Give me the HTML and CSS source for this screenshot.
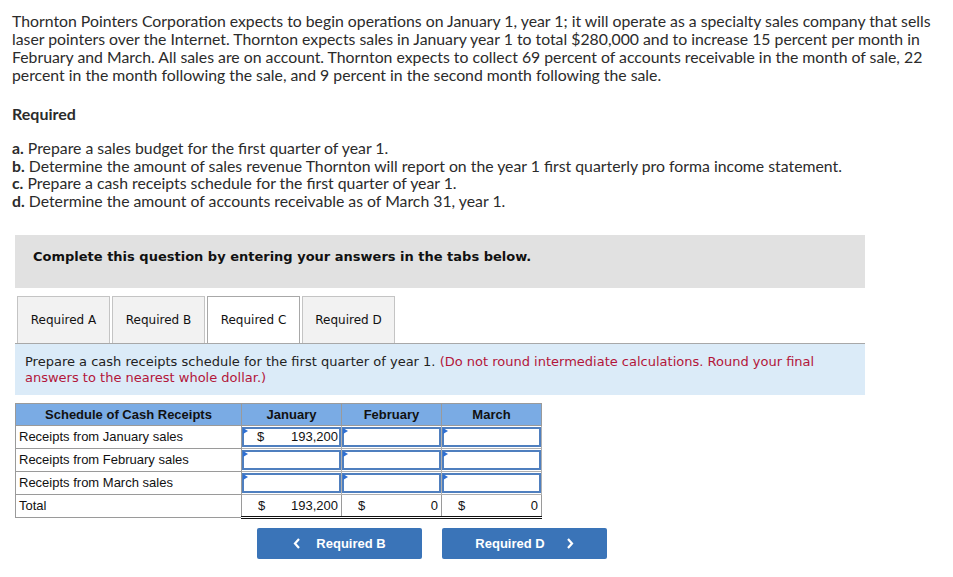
FILE: index.html
```html
<!DOCTYPE html>
<html lang="en">
<head>
    <meta charset="UTF-8">
    <meta name="viewport" content="width=device-width, initial-scale=1.0">
    <title>Cash Receipts Schedule</title>
    <link rel="stylesheet" href="styles.css">
</head>
<body>
    <p class="intro">Thornton Pointers Corporation expects to begin operations on January 1, year 1; it will operate as a specialty sales company that sells<br>
    laser pointers over the Internet. Thornton expects sales in January year 1 to total $280,000 and to increase 15 percent per month in<br>
    February and March. All sales are on account. Thornton expects to collect 69 percent of accounts receivable in the month of sale, 22<br>
    percent in the month following the sale, and 9 percent in the second month following the sale.</p>

    <h3 class="req-title">Required</h3>
    <ul class="req-list">
        <li><b>a.</b> Prepare a sales budget for the first quarter of year 1.</li>
        <li><b>b.</b> Determine the amount of sales revenue Thornton will report on the year 1 first quarterly pro forma income statement.</li>
        <li><b>c.</b> Prepare a cash receipts schedule for the first quarter of year 1.</li>
        <li><b>d.</b> Determine the amount of accounts receivable as of March 31, year 1.</li>
    </ul>

    <div class="notice">Complete this question by entering your answers in the tabs below.</div>

    <div class="tabs">
        <button class="tab">Required A</button>
        <button class="tab">Required B</button>
        <button class="tab active">Required C</button>
        <button class="tab">Required D</button>
    </div>

    <div class="prompt">
        Prepare a cash receipts schedule for the first quarter of year 1. <span class="hint">(Do not round intermediate calculations. Round your final answers to the nearest whole dollar.)</span>
    </div>

    <table class="schedule">
        <thead>
            <tr>
                <th class="label-col">Schedule of Cash Receipts</th>
                <th>January</th>
                <th>February</th>
                <th>March</th>
            </tr>
        </thead>
        <tbody>
            <tr>
                <td class="label">Receipts from January sales</td>
                <td class="entry"><div class="box"><span>$</span><span>193,200</span></div></td>
                <td class="entry"><div class="box"></div></td>
                <td class="entry"><div class="box"></div></td>
            </tr>
            <tr>
                <td class="label">Receipts from February sales</td>
                <td class="entry"><div class="box"></div></td>
                <td class="entry"><div class="box"></div></td>
                <td class="entry"><div class="box"></div></td>
            </tr>
            <tr>
                <td class="label">Receipts from March sales</td>
                <td class="entry"><div class="box"></div></td>
                <td class="entry"><div class="box"></div></td>
                <td class="entry"><div class="box"></div></td>
            </tr>
            <tr class="total">
                <td class="label">Total</td>
                <td class="sum"><span>$</span><span>193,200</span></td>
                <td class="sum"><span>$</span><span>0</span></td>
                <td class="sum"><span>$</span><span>0</span></td>
            </tr>
        </tbody>
    </table>

    <div class="nav">
        <button class="nav-btn">
            <svg width="8" height="11" viewBox="0 0 8 11"><path d="M6 1 2 5.5 6 10" fill="none" stroke="#fff" stroke-width="2.2"/></svg>
            Required B
        </button>
        <button class="nav-btn">
            Required D
            <svg width="8" height="11" viewBox="0 0 8 11"><path d="M2 1 6 5.5 2 10" fill="none" stroke="#fff" stroke-width="2.2"/></svg>
        </button>
    </div>
</body>
</html>
```

FILE: styles.css
```css
body {
    margin: 0;
    padding: 12px 12px;
    background: #fff;
    color: #2b2b2b;
    font-family: Lato, "Open Sans", sans-serif;
    width: 930px;
}
.intro {
    margin: 0;
    width: 941px;
    font-size: 15.8px;
    line-height: 18px;
}
.req-title {
    margin: 21px 0 0;
    font-size: 16px;
    line-height: 18px;
    font-weight: 700;
}
.req-list {
    list-style: none;
    margin: 16px 0 0;
    padding: 0;
    font-size: 15.8px;
    line-height: 17.7px;
}
.notice {
    margin: 25px 0 0 3px;
    width: 814px;
    padding: 14px 18px;
    height: 25px;
    background: #e1e1e1;
    font-family: Verdana, "DejaVu Sans", sans-serif;
    font-size: 13px;
    font-weight: bold;
    color: #111;
}
.tabs {
    display: flex;
    gap: 2px;
    margin: 8px 0 0 5px;
}
.tab {
    width: 93px;
    height: 47px;
    border: 1px solid #c4c4c4;
    border-bottom: none;
    background: #f2f2f2;
    font-family: Verdana, "DejaVu Sans", sans-serif;
    font-size: 12px;
    color: #111;
    padding: 0;
}
.tab.active {
    background: #fff;
    border-color: #a8a8a8;
}
.prompt {
    margin-left: 3px;
    width: 830px;
    padding: 10px 10px 9px;
    background: #dbebf8;
    border-top: 1px solid #a8a8a8;
    font-family: Verdana, "DejaVu Sans", sans-serif;
    font-size: 13px;
    line-height: 16px;
    color: #222;
}
.hint {
    color: #b3163a;
}
.schedule {
    margin: 8px 0 0 3px;
    border-collapse: collapse;
    font-family: Arial, "Liberation Sans", sans-serif;
    font-size: 13px;
    color: #111;
}
.schedule th {
    background: #7aabe4;
    border: 1px solid #9a9a9a;
    line-height: 21px;
    padding: 0;
    width: 99px;
    font-weight: bold;
}
.schedule th.label-col {
    width: 225px;
}
.label {
    border: 1px solid #9a9a9a;
    line-height: 22px;
    padding: 0 3px;
}
.entry {
    border: 1px solid #b0b0b0;
    padding: 1px 0;
}
.box {
    position: relative;
    display: flex;
    justify-content: space-between;
    align-items: center;
    height: 16px;
    padding: 0 1px 0 13px;
    border: 2px solid #4f7fbf;
    background: #fff;
}
.box::before {
    content: "";
    position: absolute;
    top: -1px;
    left: -1px;
    border-left: 5px solid #2f70d2;
    border-bottom: 3px solid transparent;
    border-top: 3px solid transparent;
}
.sum {
    border: 1px solid #9a9a9a;
    border-top-color: #111;
    border-bottom: 3px double #111;
    line-height: 21px;
    padding: 0 3px 0 16px;
}
.sum span:last-child {
    float: right;
}
.nav {
    display: flex;
    gap: 20px;
    margin: 9px 0 0 245px;
}
.nav-btn {
    display: flex;
    align-items: center;
    justify-content: center;
    gap: 15px;
    width: 165px;
    height: 31px;
    border: none;
    border-radius: 2px;
    background: #3a74b8;
    color: #fff;
    font-family: Arial, "Liberation Sans", sans-serif;
    font-size: 13px;
    font-weight: bold;
}
.nav-btn:last-child {
    gap: 21px;
}
```
